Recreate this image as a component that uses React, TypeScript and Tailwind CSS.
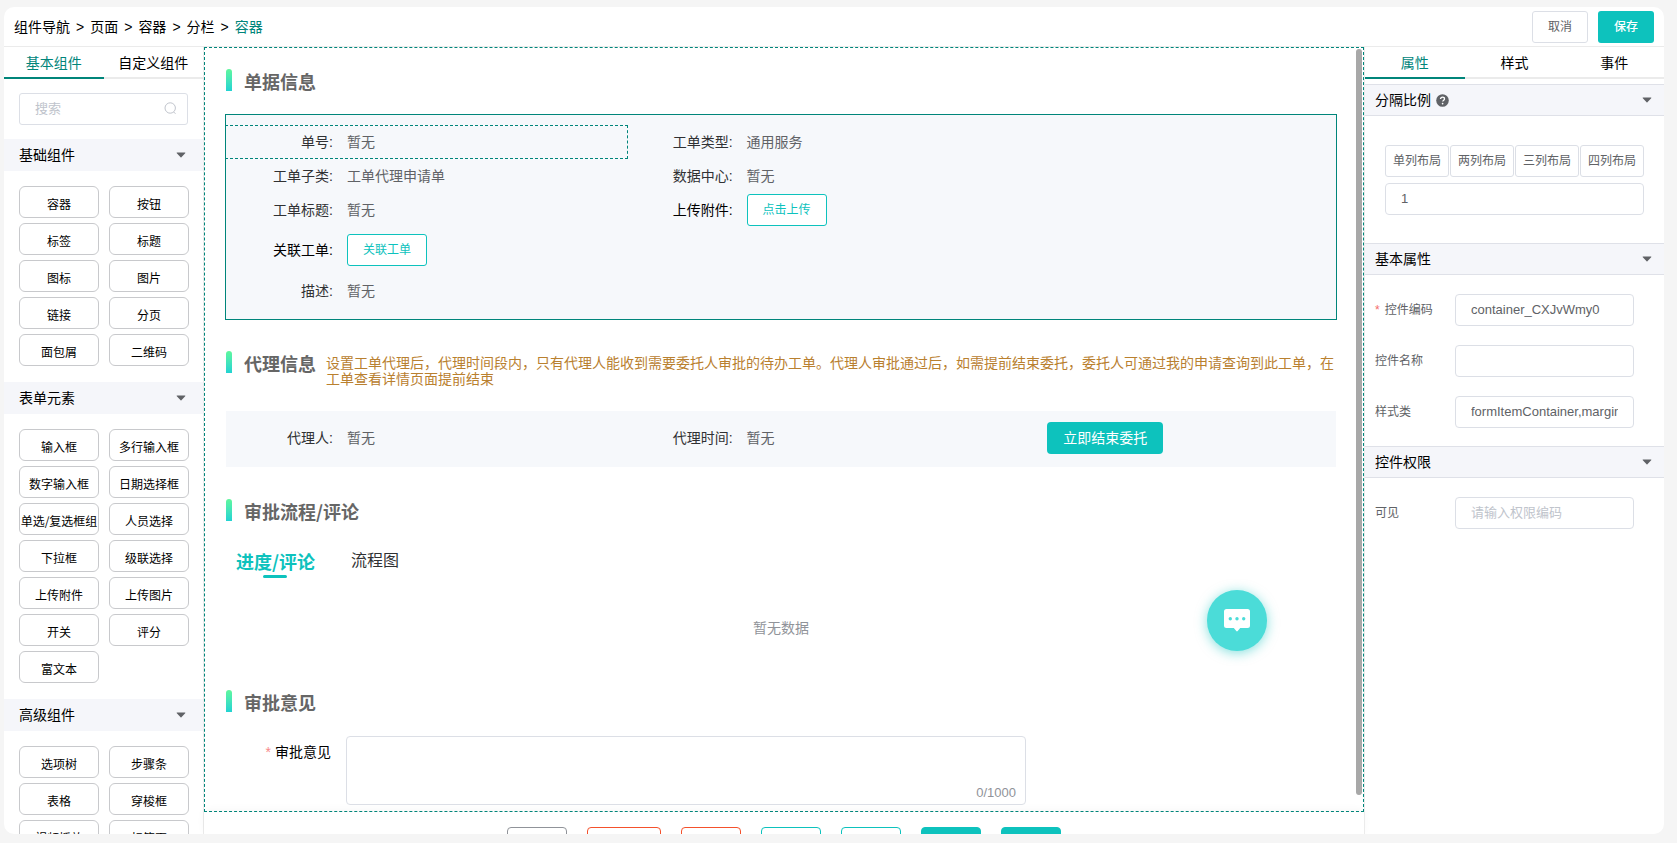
import React, { useState } from 'react';

const componentGroups = [
  {
    title: '基础组件',
    items: ['容器', '按钮', '标签', '标题', '图标', '图片', '链接', '分页', '面包屑', '二维码']
  },
  {
    title: '表单元素',
    items: [
      '输入框', '多行输入框', '数字输入框', '日期选择框', '单选/复选框组', '人员选择', '下拉框',
      '级联选择', '上传附件', '上传图片', '开关', '评分', '富文本'
    ]
  },
  {
    title: '高级组件',
    items: ['选项树', '步骤条', '表格', '穿梭框', '视频播放', '标签页']
  }
];

const footerActions = [
  { id: 'back', className: 'w-[60px] border-[#909399]' },
  { id: 'terminate', className: 'w-[74px] border-[#f4512c]' },
  { id: 'reject', className: 'w-[60px] border-[#f4512c]' },
  { id: 'transfer', className: 'w-[60px] border-[#0dc2bd]' },
  { id: 'countersign', className: 'w-[60px] border-[#0dc2bd]' },
  { id: 'approve', className: 'w-[60px] border-[#0dc2bd] bg-[#0dc2bd]' },
  { id: 'submit', className: 'w-[60px] border-[#0dc2bd] bg-[#0dc2bd]' }
];

const Caret = () => (
  <svg width="10" height="6" viewBox="0 0 10 6" fill="#606266" aria-hidden="true">
    <path d="M1.1.5h7.8c.4 0 .6.4.3.7L5.4 5.3a.6.6 0 0 1-.8 0L.8 1.2C.5.9.7.5 1.1.5z" />
  </svg>
);

type TabsProps = {
  tabs: string[];
  active: string;
  onChange: (tab: string) => void;
};

const Tabs = ({ tabs, active, onChange }: TabsProps) => (
  <div className="flex h-8 shrink-0">
    {tabs.map(tab => (
      <button
        key={tab}
        onClick={() => onChange(tab)}
        className={`flex-1 border-b-2 pt-0.5 text-sm leading-7 ${
          active === tab ? 'border-[#00857a] text-[#00857a]' : 'border-[#ebebeb] text-black'
        }`}
      >
        {tab}
      </button>
    ))}
  </div>
);

const SectionTitle = ({ title, children }: { title: string; children?: React.ReactNode }) => (
  <div className="flex items-start">
    <span className="mr-3 h-[22px] w-1.5 shrink-0 rounded-t-[3px] bg-linear-to-b from-[#5ff79c] to-[#22d3d2]" />
    <h2 className="h-[22px] shrink-0 text-lg leading-6 font-bold text-[#666] font-['Noto_Sans_CJK_SC',sans-serif]">
      {title}
    </h2>
    {children}
  </div>
);

type FieldProps = {
  label: string;
  value?: string;
  className?: string;
  labelColor?: string;
  children?: React.ReactNode;
};

const Field = ({ label, value, className = 'h-[34px]', labelColor = 'text-[#303133]', children }: FieldProps) => (
  <div className={`flex items-center text-sm ${className}`}>
    <span className={`w-[107px] shrink-0 text-right ${labelColor}`}>{label}:</span>
    <span className="ml-3.5 text-[#606266]">{value}</span>
    {children}
  </div>
);

const OutlineButton = ({ children }: { children: React.ReactNode }) => (
  <button className="h-8 w-20 rounded-[3px] border border-[#0dc2bd] bg-white text-xs text-[#0dc2bd]">
    {children}
  </button>
);

const PanelHeader = ({ title, help }: { title: string; help?: boolean }) => (
  <div className="flex h-8 items-center border-y border-[#dfe1e8] bg-[#f5f6fa] pr-3 pl-2.5 text-sm text-black">
    {title}
    {help && (
      <svg className="ml-[5px]" width="13" height="13" viewBox="0 0 13 13" aria-hidden="true">
        <circle cx="6.5" cy="6.5" r="6.3" fill="#606266" />
        <path
          d="M4.5 5.1c0-1.2.9-1.9 2-1.9s2 .7 2 1.7c0 1.3-1.8 1.3-1.8 2.7"
          fill="none"
          stroke="#fff"
          strokeWidth="1.3"
        />
        <circle cx="6.6" cy="9.6" r=".85" fill="#fff" />
      </svg>
    )}
    <span className="ml-auto">
      <Caret />
    </span>
  </div>
);

type PropertyRowProps = {
  id: string;
  label: string;
  value?: string;
  placeholder?: string;
  required?: boolean;
};

const PropertyRow = ({ id, label, value, placeholder, required }: PropertyRowProps) => (
  <div className="flex items-center pr-[30px] pl-2.5">
    <label htmlFor={id} className="w-20 shrink-0 text-xs text-[#606266]">
      {required && <span className="mr-[5px] text-[#f56c6c]">*</span>}
      {label}
    </label>
    <input
      id={id}
      type="text"
      defaultValue={value}
      placeholder={placeholder}
      className="h-8 w-full min-w-0 rounded border border-[#dcdfe6] px-[15px] pb-0.5 text-[13px] text-[#606266] placeholder:text-[#c0c4cc]"
    />
  </div>
);

const App = () => {
  const [leftTab, setLeftTab] = useState('基本组件');
  const [rightTab, setRightTab] = useState('属性');
  const [opinion, setOpinion] = useState('');

  return (
    <div className="h-screen bg-[#f5f5f5] pt-[7px] pr-[13px] pb-[9px] pl-1 font-['Liberation_Sans','Noto_Sans_CJK_SC',sans-serif]">
      <div className="flex h-full flex-col overflow-hidden rounded-[10px] bg-white">
        {/* Header */}
        <header className="flex h-10 shrink-0 items-center border-b border-[#ebebeb] pr-2.5 pl-2.5">
          <nav className="flex gap-1.5 text-sm text-black">
            <a href="#nav">组件导航</a>
            <span>&gt;</span>
            <a href="#page">页面</a>
            <span>&gt;</span>
            <a href="#container">容器</a>
            <span>&gt;</span>
            <a href="#columns">分栏</a>
            <span>&gt;</span>
            <a href="#current" className="text-[#00857a]">容器</a>
          </nav>
          <div className="ml-auto flex gap-2.5 text-xs">
            <button className="h-8 w-14 rounded-[3px] border border-[#dcdfe6] text-[#606266]">取消</button>
            <button className="h-8 w-14 rounded-[3px] bg-[#0dc2bd] font-medium text-white">保存</button>
          </div>
        </header>

        <div className="flex min-h-0 flex-1">
          {/* Component library */}
          <aside className="flex w-[200px] shrink-0 flex-col overflow-hidden border-r border-[#ebebeb]">
            <Tabs tabs={['基本组件', '自定义组件']} active={leftTab} onChange={setLeftTab} />
            <div className="relative mx-[15px] my-3.5 shrink-0">
              <input
                type="text"
                aria-label="搜索"
                placeholder="搜索"
                className="block h-8 w-full rounded-[3px] border border-[#dcdfe6] pr-8 pb-0.5 pl-[15px] text-[13px] placeholder:text-[#c0c4cc]"
              />
              <svg
                className="absolute top-[9px] right-[11px]"
                width="13"
                height="13"
                viewBox="0 0 13 13"
                fill="none"
                stroke="#c0c4cc"
                strokeWidth="1"
                aria-hidden="true"
              >
                <circle cx="6.2" cy="6" r="5.2" />
                <path d="M9.6 9.9l1.9 1.9" />
              </svg>
            </div>
            {componentGroups.map(group => (
              <section key={group.title} className="shrink-0">
                <div className="flex h-8 items-center justify-between bg-[#f5f6fa] pr-[17px] pl-[15px]">
                  <h3 className="text-sm text-black">{group.title}</h3>
                  <Caret />
                </div>
                <div className="grid grid-cols-2 gap-x-2.5 gap-y-[5px] pt-[15px] pr-3.5 pb-4 pl-[15px]">
                  {group.items.map(item => (
                    <button
                      key={item}
                      className="flex h-8 items-center justify-center rounded-md border border-[#c8c9cc] pt-[3px] text-xs whitespace-nowrap text-black font-['Noto_Sans_CJK_SC',sans-serif]"
                    >
                      {item}
                    </button>
                  ))}
                </div>
              </section>
            ))}
          </aside>

          {/* Canvas */}
          <main className="flex min-w-0 flex-1 flex-col">
            <div className="relative min-h-0 flex-1 border border-dashed border-[#00857a]">
              <div className="h-full overflow-hidden pt-[21px] pr-[27px] pl-[21px]">
                <SectionTitle title="单据信息" />
                <div className="-mx-px mt-[23px] border border-[#00857a] bg-[#f6f8fb] pt-2.5 pb-[11px]">
                  <div className="grid grid-cols-[36%_36%_1fr]">
                    <Field label="单号" value="暂无" className="-mr-0.5 -ml-px h-[34px] border border-dashed border-[#00857a]" />
                    <Field label="工单类型" value="通用服务" className="col-span-2 h-[34px]" />
                    <Field label="工单子类" value="工单代理申请单" />
                    <Field label="数据中心" value="暂无" className="col-span-2 h-[34px]" />
                    <Field label="工单标题" value="暂无" className="mb-1 h-[34px]" />
                    <Field label="上传附件" labelColor="text-black" className="col-span-2 mb-1 h-[34px]">
                      <OutlineButton>点击上传</OutlineButton>
                    </Field>
                    <Field label="关联工单" labelColor="text-black" className="col-span-3 mb-[5px] h-[38px]">
                      <OutlineButton>关联工单</OutlineButton>
                    </Field>
                    <Field label="描述" value="暂无" />
                  </div>
                </div>

                <div className="mt-[31px]">
                  <SectionTitle title="代理信息">
                    <p className="ml-2.5 pt-1 text-sm leading-4 text-[#b9802f]">
                      设置工单代理后，代理时间段内，只有代理人能收到需要委托人审批的待办工单。代理人审批通过后，如需提前结束委托，委托人可通过我的申请查询到此工单，在工单查看详情页面提前结束
                    </p>
                  </SectionTitle>
                </div>
                <div className="mt-6 grid grid-cols-[36%_36%_1fr] bg-[#f6f8fb] pt-2.5 pb-3">
                  <Field label="代理人" value="暂无" />
                  <Field label="代理时间" value="暂无" />
                  <div className="flex items-center pl-[22px]">
                    <button className="h-8 w-[116px] rounded bg-[#0dc2bd] text-sm text-white">
                      立即结束委托
                    </button>
                  </div>
                </div>

                <div className="mt-8">
                  <SectionTitle title="审批流程/评论" />
                </div>
                <div className="mt-[26px] flex gap-9 pl-2.5">
                  <button className="flex flex-col items-center text-lg leading-7 font-bold text-[#0dc2bd] font-['Noto_Sans_CJK_SC',sans-serif]">
                    进度/评论
                    <span className="h-[3px] w-6 rounded-sm bg-[#0dc2bd]" />
                  </button>
                  <button className="self-start text-base leading-7 text-[#303133]">流程图</button>
                </div>
                <p className="mt-10 text-center text-sm leading-5 text-[#909399]">暂无数据</p>

                <div className="mt-[52px]">
                  <SectionTitle title="审批意见" />
                </div>
                <div className="mt-6 flex">
                  <label htmlFor="opinion" className="w-[105px] shrink-0 text-right text-sm leading-8 text-black">
                    <span className="mr-1 text-[#f78989]">*</span>审批意见
                  </label>
                  <div className="relative ml-[15px] w-[680px]">
                    <textarea
                      id="opinion"
                      maxLength={1000}
                      value={opinion}
                      onChange={e => setOpinion(e.target.value)}
                      className="block h-[69px] w-full resize-none rounded border border-[#dcdfe6] px-[15px] py-1.5 text-sm"
                    />
                    <span className="absolute right-2.5 bottom-1 text-[13px] leading-4 text-[#909399]">
                      {opinion.length}/1000
                    </span>
                  </div>
                </div>
              </div>

              <div className="absolute top-px right-px bottom-4 w-1.5 rounded-[3px] bg-[#a8a8a8]" />
              <button
                aria-label="消息"
                className="absolute right-24 bottom-40 flex h-[61px] w-[60px] items-center justify-center rounded-full bg-[#4bdcd8] shadow-[0_2px_12px_rgba(13,194,189,0.5)]"
              >
                <svg width="26" height="23" viewBox="0 0 26 23" aria-hidden="true">
                  <path
                    d="M2.5 0h21A2.5 2.5 0 0 1 26 2.5v14a2.5 2.5 0 0 1-2.5 2.5h-7.3l-2.5 3.1a.9.9 0 0 1-1.4 0L9.8 19H2.5A2.5 2.5 0 0 1 0 16.5v-14A2.5 2.5 0 0 1 2.5 0z"
                    fill="#fff"
                  />
                  <g fill="#4bdcd8">
                    <circle cx="6.3" cy="9.7" r="1.7" />
                    <circle cx="13" cy="9.7" r="1.7" />
                    <circle cx="19.7" cy="9.7" r="1.7" />
                  </g>
                </svg>
              </button>
            </div>
            <div className="flex h-[22px] shrink-0 justify-center gap-5 pt-[15px] shadow-[0_-2px_8px_rgba(0,0,0,0.04)]">
              {footerActions.map(action => (
                <button
                  key={action.id}
                  aria-label={action.id}
                  className={`h-8 shrink-0 rounded border ${action.className}`}
                />
              ))}
            </div>
          </main>

          {/* Properties */}
          <aside className="w-[300px] shrink-0 overflow-hidden border-l border-[#ebebeb]">
            <Tabs tabs={['属性', '样式', '事件']} active={rightTab} onChange={setRightTab} />
            <div className="mt-[5px]">
              <PanelHeader title="分隔比例" help />
              <div className="px-5 pt-[29px] pb-7">
                <div className="grid grid-cols-4 gap-px">
                  {['单列布局', '两列布局', '三列布局', '四列布局'].map(layout => (
                    <button
                      key={layout}
                      className="h-8 rounded-[3px] border border-[#dcdfe6] text-xs whitespace-nowrap text-[#606266]"
                    >
                      {layout}
                    </button>
                  ))}
                </div>
                <input
                  type="text"
                  aria-label="分隔比例"
                  defaultValue="1"
                  className="mt-1.5 block h-8 w-full rounded border border-[#dcdfe6] px-[15px] pb-0.5 text-[13px] text-[#606266]"
                />
              </div>
              <PanelHeader title="基本属性" />
              <div className="flex flex-col gap-[19px] pt-[19px] pb-[18px]">
                <PropertyRow id="code" label="控件编码" value="container_CXJvWmy0" required />
                <PropertyRow id="name" label="控件名称" />
                <PropertyRow id="class" label="样式类" value="formItemContainer,margin" />
              </div>
              <PanelHeader title="控件权限" />
              <div className="pt-[19px]">
                <PropertyRow id="visible" label="可见" placeholder="请输入权限编码" />
              </div>
            </div>
          </aside>
        </div>
      </div>
    </div>
  );
};

export default App;
